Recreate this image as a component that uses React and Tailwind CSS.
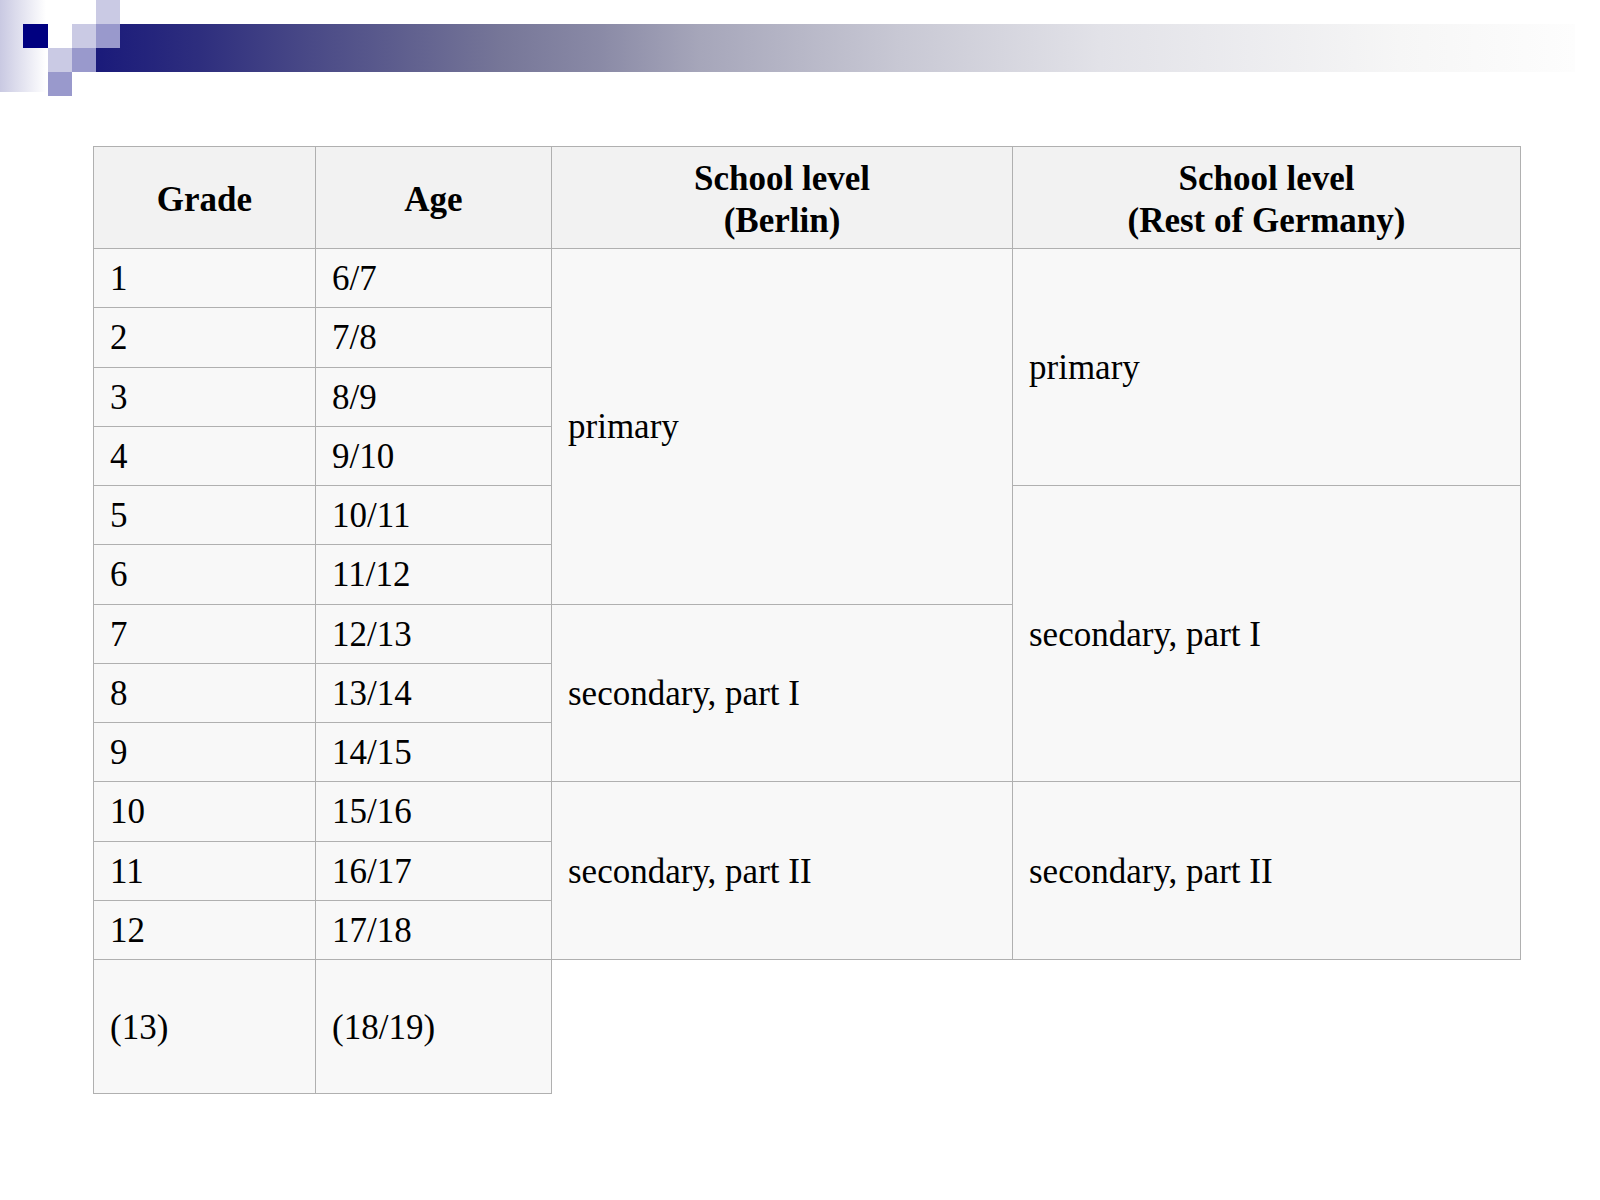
import React from "react";

function Decoration() {
  return (
    <svg width="1600" height="96" viewBox="0 0 1600 96" className="block">
      <defs>
        <linearGradient id="strip" x1="0" y1="0" x2="46" y2="0" gradientUnits="userSpaceOnUse">
          <stop offset="0" stopColor="#c9c9e2" />
          <stop offset="1" stopColor="#ffffff" />
        </linearGradient>
        <linearGradient id="bar" x1="96" y1="0" x2="1575" y2="0" gradientUnits="userSpaceOnUse">
          <stop offset="0" stopColor="#1a1a7a" />
          <stop offset={(200 - 96) / 1479} stopColor="#2e2e7e" />
          <stop offset={(300 - 96) / 1479} stopColor="#474786" />
          <stop offset={(400 - 96) / 1479} stopColor="#5e5e8e" />
          <stop offset={(500 - 96) / 1479} stopColor="#767698" />
          <stop offset={(600 - 96) / 1479} stopColor="#8a8aa6" />
          <stop offset={(700 - 96) / 1479} stopColor="#a6a6ba" />
          <stop offset={(900 - 96) / 1479} stopColor="#c8c8d4" />
          <stop offset={(1100 - 96) / 1479} stopColor="#e2e2e8" />
          <stop offset={(1400 - 96) / 1479} stopColor="#f6f6f6" />
          <stop offset="1" stopColor="#fdfdfd" />
        </linearGradient>
      </defs>
      <rect x="0" y="0" width="46" height="92" fill="url(#strip)" />
      <rect x="96" y="24" width="1479" height="48" fill="url(#bar)" />
      <rect x="23" y="24" width="25" height="24" fill="#000080" />
      <rect x="96" y="0" width="24" height="24" fill="#cacae4" />
      <rect x="72" y="24" width="24" height="24" fill="#cacae4" />
      <rect x="96" y="24" width="24" height="24" fill="#9999cc" />
      <rect x="48" y="48" width="24" height="24" fill="#cacae4" />
      <rect x="72" y="48" width="24" height="24" fill="#9999cc" />
      <rect x="48" y="72" width="24" height="24" fill="#9999cc" />
    </svg>
  );
}

const rows = [
  ["1", "6/7"],
  ["2", "7/8"],
  ["3", "8/9"],
  ["4", "9/10"],
  ["5", "10/11"],
  ["6", "11/12"],
  ["7", "12/13"],
  ["8", "13/14"],
  ["9", "14/15"],
  ["10", "15/16"],
  ["11", "16/17"],
  ["12", "17/18"],
];

const th = "border border-[#b0b0b0] bg-[#f2f2f2] font-bold text-[35px] leading-[42px] pt-[4px] text-center align-middle";
const td = "border border-[#b0b0b0] bg-[#f8f8f8] text-[35px] leading-[40px] pl-[16px] pt-[2px] text-left align-middle";

export default function App() {
  return (
    <div className="w-[1600px] h-[1200px] bg-white text-black font-['Liberation_Serif',serif]">
      <Decoration />
      <div className="pl-[93px] pt-[50px]">
        <table className="border-collapse table-fixed w-[1427px]">
          <colgroup>
            <col className="w-[222px]" />
            <col className="w-[236px]" />
            <col className="w-[461px]" />
            <col className="w-[508px]" />
          </colgroup>
          <thead>
            <tr className="h-[102px]">
              <th className={th}>Grade</th>
              <th className={th}>Age</th>
              <th className={th}>
                School level
                <br />
                (Berlin)
              </th>
              <th className={th}>
                School level
                <br />
                (Rest of Germany)
              </th>
            </tr>
          </thead>
          <tbody>
            {rows.map((r, i) => (
              <tr key={i} className="h-[59.25px]">
                <td className={td}>{r[0]}</td>
                <td className={td}>{r[1]}</td>
                {i === 0 && (
                  <td className={td} rowSpan={6}>
                    primary
                  </td>
                )}
                {i === 6 && (
                  <td className={td} rowSpan={3}>
                    secondary, part I
                  </td>
                )}
                {i === 9 && (
                  <td className={td} rowSpan={3}>
                    secondary, part II
                  </td>
                )}
                {i === 0 && (
                  <td className={td} rowSpan={4}>
                    primary
                  </td>
                )}
                {i === 4 && (
                  <td className={td} rowSpan={5}>
                    secondary, part I
                  </td>
                )}
                {i === 9 && (
                  <td className={td} rowSpan={3}>
                    secondary, part II
                  </td>
                )}
              </tr>
            ))}
            <tr className="h-[134px]">
              <td className={td}>(13)</td>
              <td className={td}>(18/19)</td>
            </tr>
          </tbody>
        </table>
      </div>
    </div>
  );
}
